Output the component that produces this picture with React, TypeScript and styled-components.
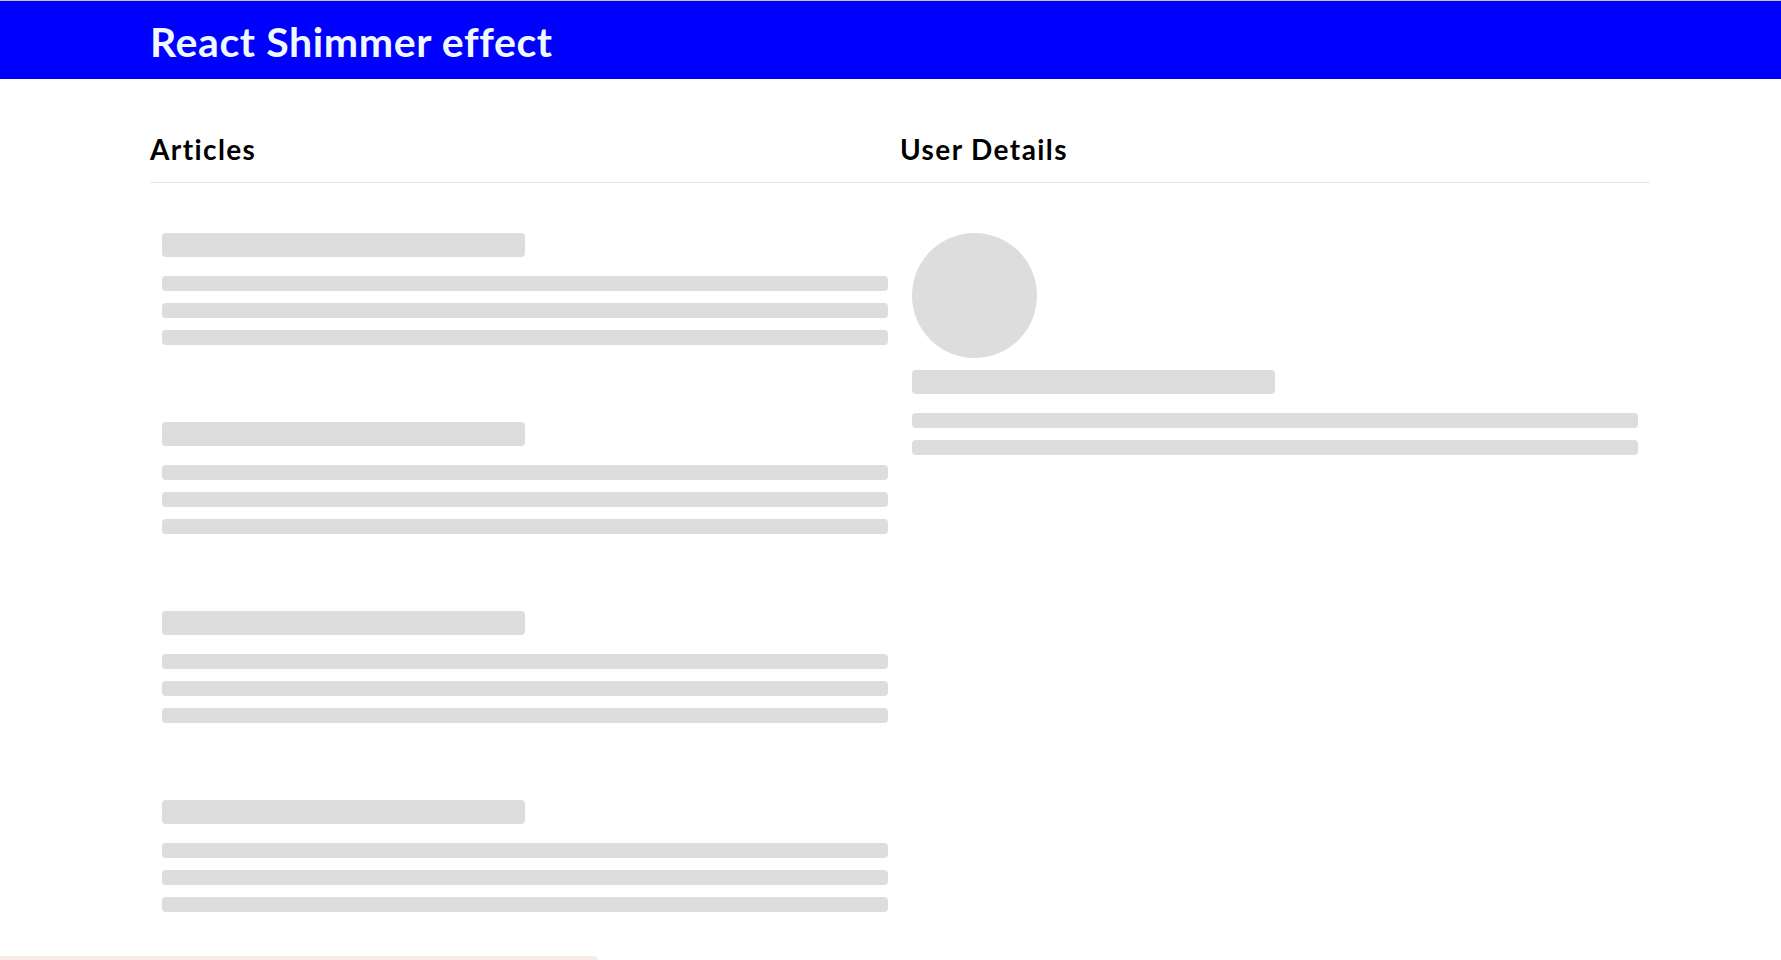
import React from 'react';
import styled, { createGlobalStyle } from 'styled-components';

const GlobalStyle = createGlobalStyle`
  body {
    margin: 0;
    background: #fff;
    font-family: Lato, 'Open Sans', sans-serif;
  }
`;

const Header = styled.header`
  height: 79px;
  border-top: 1px solid #c4c4c4;
  background-color: #0000ff;
  display: flex;
  align-items: center;
  padding-left: 150px;
  padding-top: 3px;
  box-sizing: border-box;
  h1 {
    margin: 0;
    font-size: 41px;
    font-weight: 700;
    letter-spacing: 0.6px;
    color: aliceblue;
  }
`;

const Content = styled.main`
  width: 1500px;
  margin-left: 150px;
  display: grid;
  grid-template-columns: 1fr 1fr;
  margin-top: 53px;
`;

const Column = styled.section`
  display: flex;
  flex-direction: column;
`;

const ColumnTitle = styled.h2`
  margin: 0;
  font-size: 28px;
  font-weight: 700;
  letter-spacing: 1.4px;
  color: #000;
  padding-bottom: 16px;
  border-bottom: 1px solid #e8e8e8;
`;

const ColumnBody = styled.div`
  display: flex;
  flex-direction: column;
  gap: 53px;
  padding-top: 38px;
`;

const SkeletonWrapper = styled.div`
  padding: 12px;
  display: flex;
  flex-direction: column;
`;

const Skeleton = styled.div<{ $kind: 'title' | 'text' | 'avatar' }>`
  background: #dddddd;
  border-radius: 4px;
  ${({ $kind }) =>
    $kind === 'title'
      ? `width: 50%; height: 24px; margin-bottom: 19px;`
      : $kind === 'avatar'
      ? `width: 125px; height: 125px; border-radius: 50%; margin-bottom: 12px;`
      : `width: 100%; height: 15px; margin-bottom: 12px; &:last-child { margin-bottom: 0; }`}
`;

const BottomStrip = styled.div`
  width: 598px;
  height: 4px;
  margin-top: 32px;
  background: #f7ebe7;
  border-radius: 0 4px 0 0;
`;

const SkeletonArticle = () => (
  <SkeletonWrapper>
    <Skeleton $kind='title' />
    <Skeleton $kind='text' />
    <Skeleton $kind='text' />
    <Skeleton $kind='text' />
  </SkeletonWrapper>
);

const SkeletonProfile = () => (
  <SkeletonWrapper>
    <Skeleton $kind='avatar' />
    <Skeleton $kind='title' />
    <Skeleton $kind='text' />
    <Skeleton $kind='text' />
  </SkeletonWrapper>
);

const App = () => {
  return (
    <>
      <GlobalStyle />
      <Header>
        <h1>React Shimmer effect</h1>
      </Header>
      <Content>
        <Column>
          <ColumnTitle>Articles</ColumnTitle>
          <ColumnBody>
            {[1, 2, 3, 4].map((n) => (
              <SkeletonArticle key={n} />
            ))}
          </ColumnBody>
        </Column>
        <Column>
          <ColumnTitle>User Details</ColumnTitle>
          <ColumnBody>
            <SkeletonProfile />
          </ColumnBody>
        </Column>
      </Content>
      <BottomStrip />
    </>
  );
};

export default App;
